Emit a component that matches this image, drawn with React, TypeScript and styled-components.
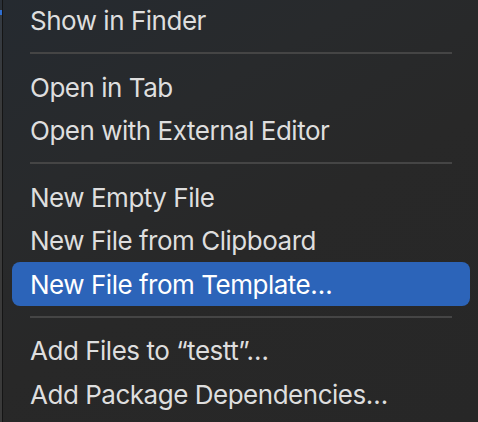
import React from "react";
import styled, { createGlobalStyle } from "styled-components";

const Global = createGlobalStyle`
  html, body { margin: 0; padding: 0; background: #282828; }
  body { width: 478px; height: 422px; overflow: hidden; }
`;

const Screen = styled.div`
  display: flex;
  width: 478px;
  height: 422px;
  background: #3a3a3a;
`;

const Edge = styled.div`
  width: 2px;
  flex: none;
  background: linear-gradient(to bottom, #2a3038 0px, #2a3038 10px, #2f6ed0 10px, #2f6ed0 15px, #343a42 15px, #3a3a3a 120px);
`;

const Menu = styled.div`
  flex: 1;
  display: flex;
  flex-direction: column;
  border-left: 1px solid #151515;
  padding: 0 8px 0 9px;
  margin-top: -1px;
  background: linear-gradient(150deg, #252a30 0%, #282a2c 30%, #282828 55%, #272727 100%);
  font-family: Inter, "Noto Sans", sans-serif;
`;

const Item = styled.div<{ $active?: boolean }>`
  height: 43.33px;
  flex: none;
  display: flex;
  align-items: center;
  padding: 0 18px;
  border-radius: 8px;
  font-size: 26px;
  letter-spacing: -0.48px;
  color: ${(p) => (p.$active ? "#ffffff" : "#dedede")};
  background: ${(p) => (p.$active ? "#2c64b9" : "transparent")};
  white-space: nowrap;
`;

const Separator = styled.div`
  flex: none;
  height: 23.4px;
  display: flex;
  align-items: flex-start;
  padding: 0 18px;
  &::after {
    content: "";
    display: block;
    margin-top: 10px;
    height: 2px;
    flex: 1;
    background: #454545;
  }
`;

const groups: string[][] = [
  ["Show in Finder"],
  ["Open in Tab", "Open with External Editor"],
  ["New Empty File", "New File from Clipboard", "New File from Template…"],
  ["Add Files to \u201Ctestt\u201D…", "Add Package Dependencies…"],
];

export default function App() {
  return (
    <>
      <Global />
      <Screen>
        <Edge />
        <Menu>
          {groups.map((g, gi) => (
            <React.Fragment key={gi}>
              {gi > 0 && <Separator />}
              {g.map((t) => (
                <Item key={t} $active={t === "New File from Template…"}>
                  {t}
                </Item>
              ))}
            </React.Fragment>
          ))}
        </Menu>
      </Screen>
    </>
  );
}
